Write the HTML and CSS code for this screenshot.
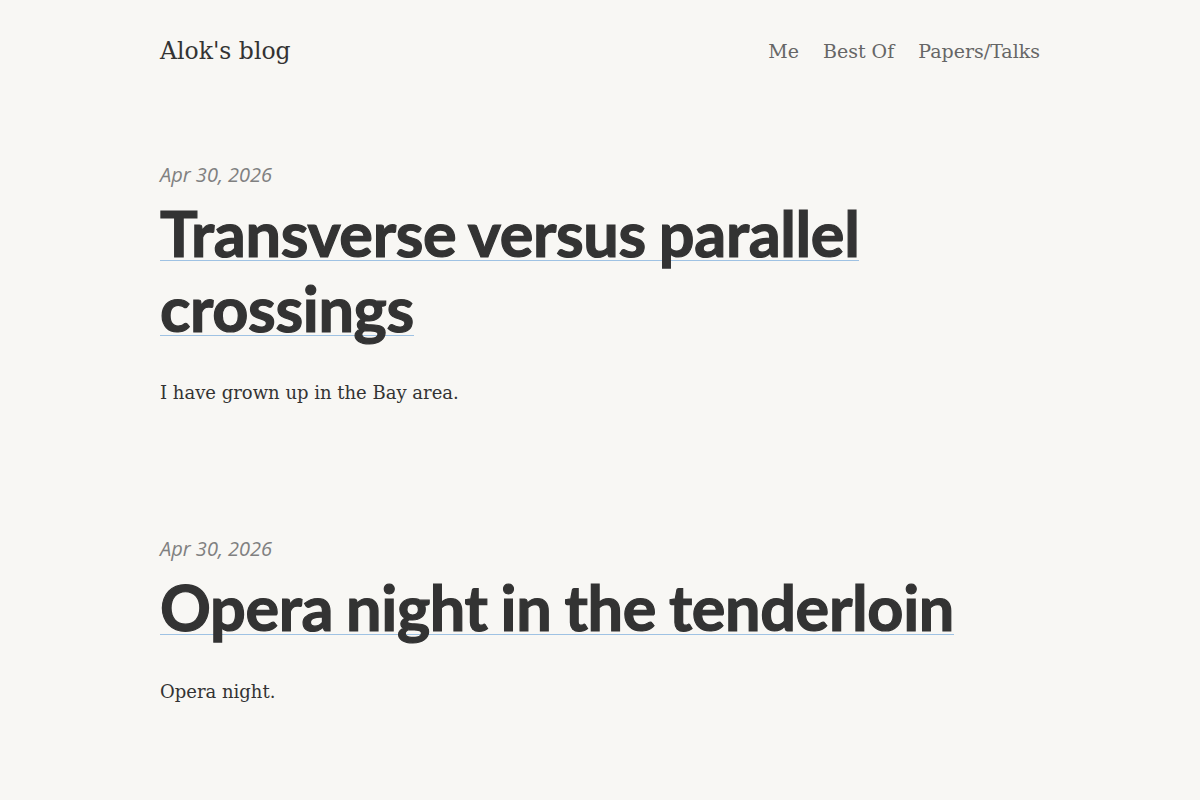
FILE: index.html
```html
<!DOCTYPE html>
<html lang="en">
<head>
<meta charset="utf-8">
<title>Alok's blog</title>
<link rel="stylesheet" href="styles.css">
</head>
<body>
<div class="page">
  <header class="site-header">
    <a class="site-title" href="#">Alok's blog</a>
    <nav class="site-nav">
      <a href="#">Me</a>
      <a href="#">Best Of</a>
      <a href="#">Papers/Talks</a>
    </nav>
  </header>
  <main class="posts">
    <article class="post">
      <div class="post-date">Apr 30, 2026</div>
      <h2 class="post-title"><a href="#">Transverse versus parallel crossings</a></h2>
      <p class="post-excerpt">I have grown up in the Bay area.</p>
    </article>
    <article class="post">
      <div class="post-date">Apr 30, 2026</div>
      <h2 class="post-title"><a href="#">Opera night in the tenderloin</a></h2>
      <p class="post-excerpt">Opera night.</p>
    </article>
  </main>
</div>
</body>
</html>
```
FILE: styles.css
```css
html, body {
  margin: 0;
  padding: 0;
  background: #f8f7f4;
}
body {
  font-family: "DejaVu Serif", "Liberation Serif", serif;
  color: #333;
}
.page {
  width: 880px;
  margin: 0 auto;
}
.site-header {
  display: flex;
  justify-content: space-between;
  align-items: center;
  height: 102px;
}
.site-title {
  font-size: 23.5px;
  color: #333;
  text-decoration: none;
}
.site-nav {
  display: flex;
  gap: 24px;
}
.site-nav a {
  font-size: 19px;
  color: #666;
  text-decoration: none;
}
.posts {
  padding-top: 58px;
}
.post {
  margin-bottom: 126px;
}
.post-date {
  font-family: "Open Sans", "Noto Sans", sans-serif;
  font-style: italic;
  font-size: 20px;
  color: #808080;
  line-height: 30px;
}
.post-title {
  font-family: Lato, sans-serif;
  font-weight: 700;
  font-size: 63px;
  line-height: 75px;
  margin: 5px 0 0;
  letter-spacing: -0.35px;
  word-spacing: -2px;
}
.post-title a {
  color: #333;
  text-decoration: none;
  -webkit-text-stroke: 1.2px #333;
  background-image: linear-gradient(#9fc2e3, #9fc2e3);
  background-repeat: no-repeat;
  background-size: 100% 1px;
  background-position: 0 calc(100% - 9px);
}
.post-excerpt {
  font-size: 18px;
  line-height: 30px;
  margin: 33px 0 0;
}
```
